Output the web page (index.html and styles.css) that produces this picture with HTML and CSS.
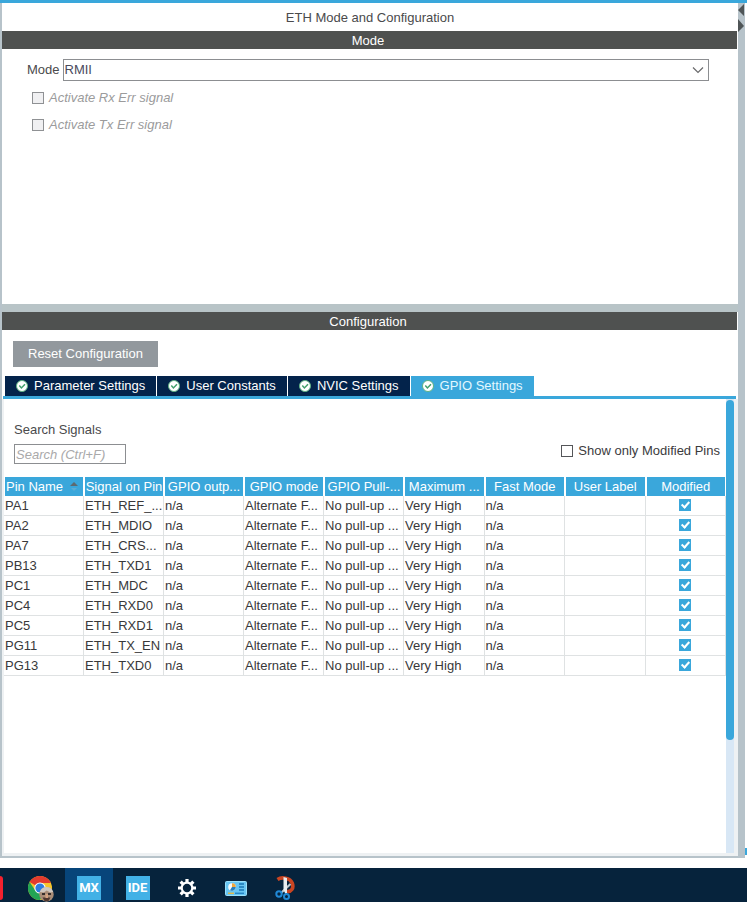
FILE: index.html
```html
<!DOCTYPE html>
<html lang="en">
<head>
<meta charset="utf-8">
<meta name="viewport" content="width=device-width, initial-scale=1">
<title>ETH Mode and Configuration</title>
<link rel="stylesheet" href="styles.css">
</head>
<body>
<svg class="defs" aria-hidden="true">
  <symbol id="ok" viewBox="0 0 12 12">
    <circle cx="6" cy="6" r="5.5" fill="#fff" stroke="#5db183"/>
    <path d="M3.3 5.6 5.4 8 9 4.2" fill="none" stroke="#43a06c" stroke-width="1.5"/>
  </symbol>
</svg>
<div class="workspace">
  <main class="panel">
    <h1 class="title">ETH Mode and Configuration</h1>
    <section class="mode">
      <h2 class="bar">Mode</h2>
      <div class="mode-body">
        <div class="mode-row">
          <label for="mode">Mode</label>
          <div class="select">
            <select id="mode"><option>RMII</option></select>
            <svg class="chevron" viewBox="0 0 12 8" aria-hidden="true"><path d="M1 1.500 6 6.500 11 1.500" fill="none" stroke="#6a6a6c" stroke-width="1.200"/></svg>
          </div>
        </div>
        <label class="signal"><input type="checkbox" class="box" disabled>Activate Rx Err signal</label>
        <label class="signal"><input type="checkbox" class="box" disabled>Activate Tx Err signal</label>
      </div>
    </section>
    <section class="config">
      <h2 class="bar">Configuration</h2>
      <button class="reset" type="button">Reset Configuration</button>
      <div class="tabs" role="tablist">
        <button class="tab" type="button" role="tab"><svg><use href="#ok"/></svg>Parameter Settings</button>
        <button class="tab" type="button" role="tab"><svg><use href="#ok"/></svg>User Constants</button>
        <button class="tab" type="button" role="tab"><svg><use href="#ok"/></svg>NVIC Settings</button>
        <button class="tab active" type="button" role="tab" aria-selected="true"><svg><use href="#ok"/></svg>GPIO Settings</button>
      </div>
      <div class="pane">
        <div class="content">
          <div class="filters">
            <div class="search">
              <label for="search">Search Signals</label>
              <input id="search" type="text" placeholder="Search (Ctrl+F)">
            </div>
            <label class="only"><input type="checkbox" class="box">Show only Modified Pins</label>
          </div>
          <table class="pins">
            <colgroup><col class="fixed" span="5"><col span="4"></colgroup>
            <thead>
              <tr>
                <th class="sorted">Pin Name<svg class="sort" viewBox="0 0 8 10" aria-hidden="true"><path d="M0 5 4 1 8 5Z" fill="#5d6a70"/><path d="M1 7h6L4 10Z" fill="#5baed6"/></svg></th>
                <th class="tight">Signal on Pin</th><th>GPIO outp...</th><th>GPIO mode</th><th>GPIO Pull-...</th><th>Maximum ...</th><th>Fast Mode</th><th>User Label</th><th>Modified</th>
              </tr>
            </thead>
            <tbody>
              <tr><td>PA1</td><td>ETH_REF_...</td><td>n/a</td><td>Alternate F...</td><td>No pull-up ...</td><td>Very High</td><td>n/a</td><td></td><td><input type="checkbox" class="check" aria-label="PA1 modified" checked></td></tr>
              <tr><td>PA2</td><td>ETH_MDIO</td><td>n/a</td><td>Alternate F...</td><td>No pull-up ...</td><td>Very High</td><td>n/a</td><td></td><td><input type="checkbox" class="check" aria-label="PA2 modified" checked></td></tr>
              <tr><td>PA7</td><td>ETH_CRS...</td><td>n/a</td><td>Alternate F...</td><td>No pull-up ...</td><td>Very High</td><td>n/a</td><td></td><td><input type="checkbox" class="check" aria-label="PA7 modified" checked></td></tr>
              <tr><td>PB13</td><td>ETH_TXD1</td><td>n/a</td><td>Alternate F...</td><td>No pull-up ...</td><td>Very High</td><td>n/a</td><td></td><td><input type="checkbox" class="check" aria-label="PB13 modified" checked></td></tr>
              <tr><td>PC1</td><td>ETH_MDC</td><td>n/a</td><td>Alternate F...</td><td>No pull-up ...</td><td>Very High</td><td>n/a</td><td></td><td><input type="checkbox" class="check" aria-label="PC1 modified" checked></td></tr>
              <tr><td>PC4</td><td>ETH_RXD0</td><td>n/a</td><td>Alternate F...</td><td>No pull-up ...</td><td>Very High</td><td>n/a</td><td></td><td><input type="checkbox" class="check" aria-label="PC4 modified" checked></td></tr>
              <tr><td>PC5</td><td>ETH_RXD1</td><td>n/a</td><td>Alternate F...</td><td>No pull-up ...</td><td>Very High</td><td>n/a</td><td></td><td><input type="checkbox" class="check" aria-label="PC5 modified" checked></td></tr>
              <tr><td>PG11</td><td>ETH_TX_EN</td><td>n/a</td><td>Alternate F...</td><td>No pull-up ...</td><td>Very High</td><td>n/a</td><td></td><td><input type="checkbox" class="check" aria-label="PG11 modified" checked></td></tr>
              <tr><td>PG13</td><td>ETH_TXD0</td><td>n/a</td><td>Alternate F...</td><td>No pull-up ...</td><td>Very High</td><td>n/a</td><td></td><td><input type="checkbox" class="check" aria-label="PG13 modified" checked></td></tr>
            </tbody>
          </table>
        </div>
        <div class="scroll"><div class="thumb"></div></div>
      </div>
    </section>
  </main>
  <div class="divider">
    <svg viewBox="0 0 7 32" aria-hidden="true"><path d="M6 1v12L0 7Z M0 16v13l6-6Z" fill="#4f5557"/></svg>
  </div>
  <div class="edge"><span></span></div>
</div>
<footer class="taskbar">
  <span class="red"></span>
  <button class="task chrome" type="button" aria-label="Chrome">
    <svg viewBox="0 0 26 26">
      <circle cx="12" cy="12" r="12" fill="#f6c52c"/>
      <path d="M12 12 1.6 6A12 12 0 0 1 22.4 6L23 7H12Z" fill="#e33b2e"/>
      <path d="M1.6 6A12 12 0 0 0 12 24l5-9-5-3-5 2Z" fill="#23a455"/>
      <circle cx="12" cy="12" r="5.6" fill="#fff"/><circle cx="12" cy="12" r="4.6" fill="#2f7de0"/>
      <circle cx="18.5" cy="18.5" r="7.200" fill="#a98d77"/>
      <path d="M11.800 16a7 7 0 0 1 13.400 0l-3 .5-3.500-2-3 2Z" fill="#d0c8bf"/>
      <path d="M14 17h3v2h-3zM20 17h3v2h-3z" fill="#39302c"/>
      <path d="M14.500 21.500h8l-2 3.500h-4Z" fill="#50382f"/>
      <path d="M17.500 18h2.500v4h-2.500Z" fill="#d5a27f"/>
    </svg>
  </button>
  <button class="task current" type="button"><span class="tile">MX</span></button>
  <button class="task" type="button"><span class="tile">IDE</span></button>
  <button class="task" type="button" aria-label="Settings">
    <svg viewBox="0 0 20 20">
      <g stroke="#fff" stroke-width="3.200"><path d="M10 1v4M10 15v4M1 10h4M15 10h4M3.600 3.600l2.800 2.800M13.600 13.600l2.800 2.800M3.600 16.400l2.800-2.800M13.600 6.400l2.800-2.800"/></g>
      <circle cx="10" cy="10" r="5.300" fill="#06233c" stroke="#fff" stroke-width="2.200"/>
    </svg>
  </button>
  <button class="task panel-icon" type="button" aria-label="Control Panel">
    <svg viewBox="0 0 22 15">
      <rect x=".5" y=".5" width="21" height="14" rx="1" fill="#68c5f2" stroke="#9be0fa"/>
      <circle cx="7" cy="6" r="3.800" fill="#f4f8fa"/>
      <path d="M7 6V2.200A3.800 3.800 0 0 1 10.800 6Z" fill="#f2a63a"/>
      <path d="M7 6h3.800A3.800 3.800 0 0 1 5 9.200Z" fill="#277fbd"/>
      <path d="M14 3h5M14 6h5M14 9h5" stroke="#1977b5" stroke-width="1.500"/>
      <path d="M3 12.300h6" stroke="#e0b849" stroke-width="1.500"/><path d="M10 12.300h9" stroke="#2787c5" stroke-width="1.500"/>
    </svg>
  </button>
  <button class="task snip" type="button" aria-label="Snipping Tool">
    <svg viewBox="0 0 20 24">
      <path d="M2.500 3.500C7 .5 15 2 17.200 7c2 5-1 9.500-6 8.500" fill="none" stroke="#c94522" stroke-width="3.600"/>
      <path d="M15.500 8 6 17" stroke="#bdc8cf" stroke-width="2.200"/>
      <path d="M8.500 1v13l2 4 1.500-1V2Z" fill="#e8edf0"/>
      <g fill="none" stroke="#2189d6" stroke-width="2"><circle cx="4" cy="18" r="2.700"/><circle cx="11.500" cy="20.500" r="2.500"/></g>
    </svg>
  </button>
</footer>
</body>
</html>
```
FILE: styles.css
```css
*, *::before { box-sizing: border-box; }
body {
  margin: 0;
  min-height: 100vh;
  display: flex;
  flex-direction: column;
  background: #fff;
  color: #4a4a4c;
  font: 13px/16px "Liberation Sans", Arial, sans-serif;
}
button, input, select { font: inherit; }
h1, h2 { margin: 0; font-size: 13px; font-weight: 400; text-align: center; }
.defs { display: none; }

.workspace {
  flex: 1;
  display: flex;
  margin-bottom: 10px;
  border-top: 3px solid #3aa7db;
}
.panel {
  flex: 1;
  min-width: 0;
  display: flex;
  flex-direction: column;
  border-left: 2px solid #b7c3ca;
  border-bottom: 2px solid #b7c3ca;
}
.title { height: 28px; line-height: 30px; }
.bar {
  height: 18px;
  margin-right: 1px;
  padding-right: 3px;
  line-height: 20px;
  background: #4f5150;
  color: #fff;
}
.mode { border-bottom: 8px solid #b8c4c7; flex: 273 0 0; }
.config { flex: 544 0 0; display: flex; flex-direction: column; }
.mode-body { padding: 10px 29px 0 25px; }
.mode-row { display: flex; align-items: center; gap: 3px; margin-bottom: 3px; }
.select { flex: 1; position: relative; }
select {
  display: block;
  width: 100%;
  height: 22px;
  padding: 0 1px;
  border: 1px solid #8c8e91;
  border-radius: 0;
  background: #fff;
  color: #4a4a5c;
  appearance: none;
}
.chevron { position: absolute; right: 5px; top: 7px; width: 12px; height: 8px; }
.signal, .only { display: flex; align-items: center; gap: 5px; }
.signal { height: 27px; padding-left: 5px; color: #9b9b9c; font-style: italic; }
.box {
  appearance: none;
  width: 12px;
  height: 12px;
  margin: 0;
  border: 1px solid #555659;
  background: #fff;
}
.box:disabled { border-color: #8f9194; background: #f0f0f2; }

.reset {
  align-self: flex-start;
  height: 26px;
  margin: 11px 0 9px 11px;
  padding: 0 15px;
  border: 0;
  background: #92989d;
  color: #fff;
}
.tabs {
  display: flex;
  gap: 1px;
  margin: 0 2px 0 1px;
  padding-left: 2px;
  border-bottom: 3px solid #3aa7db;
}
.tab {
  display: flex;
  align-items: center;
  gap: 6px;
  height: 20px;
  padding: 0 11px;
  border: 0;
  background: #03234b;
  color: #fff;
}
.tab.active { background: #3aa7db; color: #e2f8ff; }
.tab svg { width: 12px; height: 12px; }
.pane {
  flex: 1;
  display: flex;
  border: solid #eef1f3;
  border-width: 0 4px 3px 2px;
}
.content { flex: 1; min-width: 0; }
.filters {
  display: flex;
  justify-content: space-between;
  align-items: flex-end;
  padding: 23px 6px 0 10px;
  margin-bottom: 13px;
}
.search { display: flex; flex-direction: column; gap: 6px; }
.search input {
  width: 112px;
  height: 20px;
  padding: 0 1px;
  border: 1px solid #8c8e91;
}
.search input::placeholder { color: #a9a9aa; font-style: italic; opacity: 1; }
.only { color: #3b3b3d; padding-bottom: 5px; }

.pins {
  width: 100%;
  table-layout: fixed;
  border-collapse: separate;
  border-spacing: 0;
  color: #38383a;
}
.fixed { width: 80px; }
.pins th, .pins td { white-space: nowrap; }
.pins th {
  height: 19px;
  padding: 0 2px;
  border: solid #fff;
  border-width: 0 1px 0 1px;
  background: #3aa7db;
  color: #fff;
  font-weight: 400;
}
.pins th.tight { padding: 0; }
.pins th.sorted { padding: 0 1px; text-align: left; }
.sort { width: 8px; height: 10px; margin-left: 7px; }
.pins td {
  height: 20px;
  padding: 0 1px;
  border-right: 1px solid #dfe2e3;
  border-bottom: 1px solid #dfe2e3;
}
.pins td:last-child { text-align: center; }
.check {
  display: grid;
  place-items: center;
  appearance: none;
  width: 12px;
  height: 12px;
  margin: 0 auto 2px;
  background: #3aa7db;
}
.check::before {
  content: "";
  width: 5px;
  height: 8px;
  margin-bottom: 2px;
  border: solid #fff;
  border-width: 0 2px 2px 0;
  transform: rotate(42deg);
}
.scroll { width: 8px; padding-top: 1px; background: #d8e7f5; }
.thumb { height: 75%; border-radius: 4px; background: #3aa7db; }

.divider { width: 7px; background: #b7c3ca; }
.divider svg { display: block; width: 7px; height: 32px; }
.edge { width: 2px; display: flex; align-items: flex-end; }
.edge span { width: 2px; height: 7px; margin-bottom: 3px; background: #3aa7db; }

.taskbar { display: flex; height: 34px; background: #06233c; overflow: hidden; }
.red { width: 3px; height: 24px; margin: 8px 13px 0 0; border-radius: 0 3px 3px 0; background: #f5212e; }
.task {
  width: 49px;
  height: 34px;
  padding: 6px 0 0;
  border: 0;
  display: flex;
  align-items: center;
  justify-content: center;
  background: transparent;
}
.task svg { width: 20px; height: 20px; }
.task.chrome { align-items: flex-end; }
.task.chrome svg { width: 26px; height: 26px; }
.task.panel-icon svg { width: 22px; height: 15px; }
.task.snip svg { width: 20px; height: 24px; }
.task.current { width: 48px; background: #07457a; }
.tile {
  width: 24px;
  height: 24px;
  background: #42b1e6;
  color: #fff;
  font: 700 13px/24px Roboto, sans-serif;
}
```
